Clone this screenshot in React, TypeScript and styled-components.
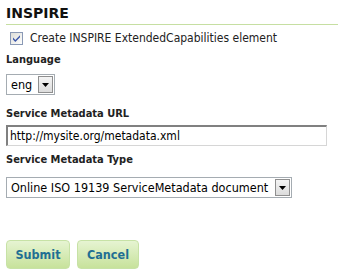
import React from 'react'
import styled, { createGlobalStyle } from 'styled-components'

const GlobalStyle = createGlobalStyle`
  body {
    margin: 0;
    background: #ffffff;
    font-family: "DejaVu Sans Condensed", "DejaVu Sans", sans-serif;
    color: #222;
  }
`

const Page = styled.div`
  width: 338px;
  height: 276px;
  padding: 5px 0 0 6px;
  box-sizing: border-box;
  overflow: hidden;
`

const Heading = styled.h2`
  margin: 0;
  padding: 0 0 3px 0;
  font-family: "DejaVu Sans", sans-serif;
  font-size: 14px;
  font-weight: bold;
  color: #111;
  border-bottom: 1px solid #c6dfa2;
  line-height: 16px;
`

const CheckRow = styled.label`
  display: flex;
  align-items: center;
  gap: 7px;
  margin: 6px 0 0 4px;
  font-size: 12px;
  color: #222;
  height: 14px;
  white-space: nowrap;
`

const Label = styled.div<{ $top: number }>`
  margin-top: ${({ $top }) => $top}px;
  font-size: 11px;
  font-weight: bold;
  color: #222;
  line-height: 13px;
`

const SelectBox = styled.div<{ $width: number; $top: number }>`
  display: flex;
  align-items: center;
  justify-content: space-between;
  width: ${({ $width }) => $width}px;
  height: 21px;
  margin-top: ${({ $top }) => $top}px;
  box-sizing: border-box;
  border: 1px solid #a5acb2;
  padding: 0 1px 0 4px;
  font-size: 12.5px;
  color: #000;
  background: #fff;
  white-space: nowrap;
`

const ArrowButton = styled.span`
  display: flex;
  align-items: center;
  justify-content: center;
  flex-shrink: 0;
  width: 15px;
  height: 17px;
  box-sizing: border-box;
  border: 1px solid #8f8f8f;
  background: linear-gradient(#f4f4f4, #dcdcdc);
`

const TextInput = styled.div`
  width: 321px;
  height: 21px;
  margin-top: 5px;
  box-sizing: border-box;
  border: 1px solid #d6d6d6;
  border-top: 2px solid #808080;
  border-left: 2px solid #808080;
  padding: 1px 0 0 2px;
  font-size: 12px;
  color: #000;
  line-height: 16px;
  white-space: nowrap;
`

const Buttons = styled.div`
  display: flex;
  gap: 7px;
  margin-top: 42px;
`

const Button = styled.button<{ $width: number }>`
  width: ${({ $width }) => $width}px;
  height: 29px;
  border: 1px solid #c7e2a6;
  border-radius: 4px;
  background: linear-gradient(#e6f4d2, #c7e29b);
  font-family: "DejaVu Sans Condensed", "DejaVu Sans", sans-serif;
  font-size: 12.5px;
  font-weight: bold;
  color: #1f6f93;
  padding: 0;
`

const Arrow = () => (
  <svg width="7" height="4" viewBox="0 0 7 4">
    <path d="M0 0 H7 L3.5 4 Z" fill="#000" />
  </svg>
)

const Check = () => (
  <svg width="13" height="13" viewBox="0 0 13 13">
    <defs>
      <linearGradient id="cb" x1="0" y1="0" x2="1" y2="1">
        <stop offset="0" stopColor="#dcdcd6" />
        <stop offset="1" stopColor="#ffffff" />
      </linearGradient>
    </defs>
    <rect x="0.5" y="0.5" width="12" height="12" fill="url(#cb)" stroke="#8a99b5" />
    <path d="M3 5.5 L5.3 8 L10 3.2 L10 5.2 L5.3 10 L3 7.5 Z" fill="#3a55a8" />
  </svg>
)

export default function App() {
  return (
    <Page>
      <GlobalStyle />
      <Heading>INSPIRE</Heading>
      <CheckRow>
        <Check />
        Create INSPIRE ExtendedCapabilities element
      </CheckRow>
      <Label $top={8}>Language</Label>
      <SelectBox $width={49} $top={8}>
        eng
        <ArrowButton>
          <Arrow />
        </ArrowButton>
      </SelectBox>
      <Label $top={12}>Service Metadata URL</Label>
      <TextInput>http://mysite.org/metadata.xml</TextInput>
      <Label $top={7}>Service Metadata Type</Label>
      <SelectBox $width={286} $top={11}>
        Online ISO 19139 ServiceMetadata document
        <ArrowButton>
          <Arrow />
        </ArrowButton>
      </SelectBox>
      <Buttons>
        <Button $width={64}>Submit</Button>
        <Button $width={62}>Cancel</Button>
      </Buttons>
    </Page>
  )
}
